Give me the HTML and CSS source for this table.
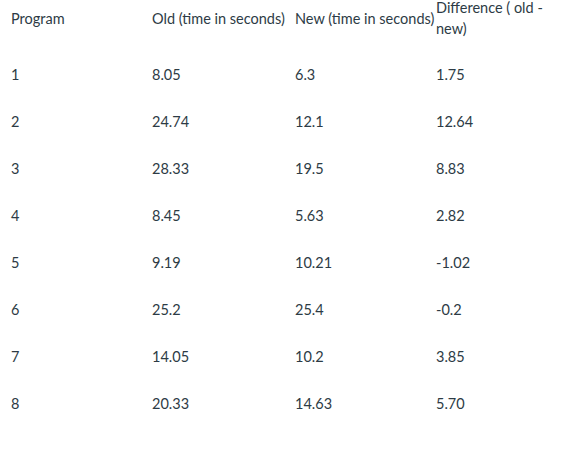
FILE: index.html
```html
<!DOCTYPE html>
<html>
<head>
<meta charset="utf-8">
<link rel="stylesheet" href="styles.css">
</head>
<body>
<table class="grid">
  <colgroup>
    <col class="c1"><col class="c2"><col class="c3"><col class="c4">
  </colgroup>
  <thead>
    <tr class="head">
      <th>Program</th>
      <th>Old (time in seconds)</th>
      <th>New (time in seconds)</th>
      <th>Difference ( old - new)</th>
    </tr>
  </thead>
  <tbody>
    <tr><td>1</td><td>8.05</td><td>6.3</td><td>1.75</td></tr>
    <tr><td>2</td><td>24.74</td><td>12.1</td><td>12.64</td></tr>
    <tr><td>3</td><td>28.33</td><td>19.5</td><td>8.83</td></tr>
    <tr><td>4</td><td>8.45</td><td>5.63</td><td>2.82</td></tr>
    <tr><td>5</td><td>9.19</td><td>10.21</td><td>-1.02</td></tr>
    <tr><td>6</td><td>25.2</td><td>25.4</td><td>-0.2</td></tr>
    <tr><td>7</td><td>14.05</td><td>10.2</td><td>3.85</td></tr>
    <tr><td>8</td><td>20.33</td><td>14.63</td><td>5.70</td></tr>
  </tbody>
</table>
</body>
</html>
```
FILE: styles.css
```css
html, body {
  margin: 0;
  padding: 0;
  background: #ffffff;
}
body {
  font-family: Lato, "Liberation Sans", sans-serif;
  font-size: 14.5px;
  line-height: 21px;
  color: #2d3b45;
}
.grid {
  border-collapse: collapse;
  table-layout: fixed;
  width: 561px;
  margin-top: -3px;
}
.c1 { width: 141px; }
.c2 { width: 143px; }
.c3 { width: 141px; }
.c4 { width: 136px; }
.grid th,
.grid td {
  font-weight: normal;
  text-align: left;
  vertical-align: middle;
  padding: 13px 0 13px 11px;
}
.head th {
  padding-top: 0;
  padding-bottom: 12px;
  white-space: nowrap;
}
.head th:last-child {
  white-space: normal;
}
```
